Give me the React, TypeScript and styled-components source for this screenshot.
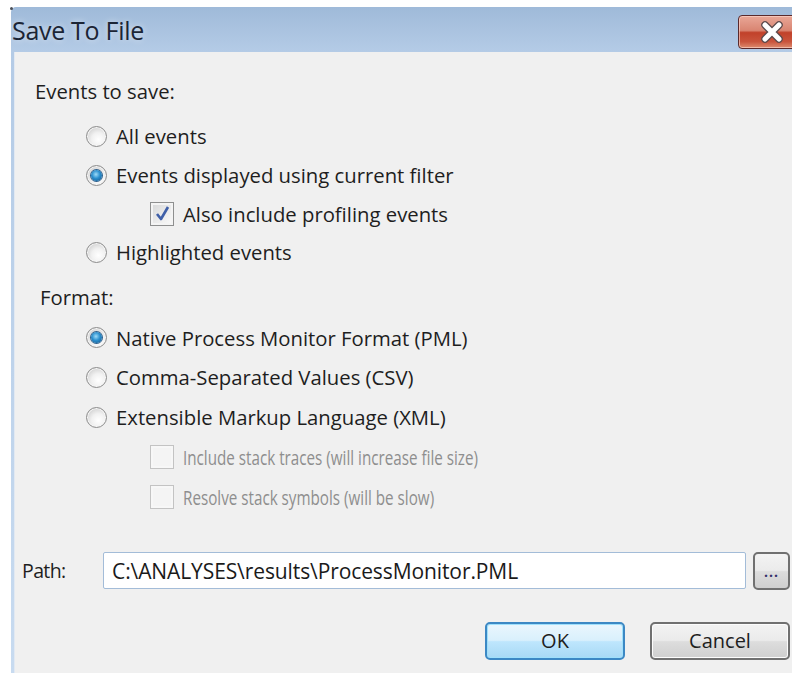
import styled, { createGlobalStyle } from 'styled-components'

const GlobalStyle = createGlobalStyle`
  html, body {
    margin: 0;
    padding: 0;
    background: #ffffff;
  }
  body {
    font-family: 'Open Sans', 'Noto Sans', sans-serif;
  }
`

const Screen = styled.div`
  width: 792px;
  height: 673px;
  overflow: hidden;
  padding: 7px 0 0 11px;
  box-sizing: border-box;
  background: #ffffff;
`

const Window = styled.div`
  position: relative;
  display: flex;
  flex-direction: column;
  height: 100%;
  border-top-left-radius: 5px;
  background: linear-gradient(180deg, #9fbad9 0px, #b4cbe6 44px, #c8dbf0 100%);

  /* dark pixel where the frame corner is drawn */
  &::before {
    content: '';
    position: absolute;
    left: -1px;
    top: 0;
    width: 3px;
    height: 3px;
    border-radius: 50%;
    background: #4a4f58;
  }
`

const TitleBar = styled.div`
  display: flex;
  align-items: center;
  justify-content: space-between;
  height: 45px;
  flex-shrink: 0;
  overflow: hidden;
`

const Title = styled.div`
  padding-left: 1px;
  font-size: 25px;
  letter-spacing: -0.3px;
  color: #1b2535;
  text-shadow: 0 0 6px rgba(255, 255, 255, 0.6);
`

const CloseButton = styled.div`
  display: flex;
  align-items: center;
  justify-content: center;
  width: 68px;
  height: 34px;
  margin-right: -14px;
  margin-top: 4px;
  box-sizing: border-box;
  border: 1px solid #5a2a2c;
  border-radius: 4px;
  background: linear-gradient(180deg, #e9a797 0%, #d98572 45%, #c1412a 52%, #c9543c 80%, #dd8c6f 100%);
  box-shadow: inset 0 0 0 1px rgba(255, 220, 210, 0.6);
`

const Body = styled.div`
  flex: 1;
  margin-left: 3px;
  padding: 19px 0 0 0;
  background: #f0f0f0;
  border-left: 1px solid #e2e9f2;
  color: #1e1e1e;
  font-size: 20.3px;
`

const Heading = styled.div<{ $indent: number; $top?: number }>`
  display: flex;
  align-items: center;
  height: 39px;
  margin-top: ${p => p.$top ?? 0}px;
  padding-left: ${p => p.$indent}px;
`

const Group = styled.div<{ $top: number; $row: number }>`
  display: flex;
  flex-direction: column;
  margin-top: ${p => p.$top}px;

  & > * {
    height: ${p => p.$row}px;
  }
`

const Row = styled.div<{ $indent: number; $disabled?: boolean }>`
  display: flex;
  align-items: center;
  gap: 9px;
  padding-left: ${p => p.$indent}px;
  color: ${p => (p.$disabled ? '#8e8e8e' : 'inherit')};
`

const Label = styled.span<{ $narrow?: boolean }>`
  display: inline-block;
  white-space: nowrap;
  transform: ${p => (p.$narrow ? 'scaleX(0.75)' : 'none')};
  transform-origin: left center;
`

const RadioCircle = styled.span<{ $checked?: boolean }>`
  position: relative;
  width: 21px;
  height: 21px;
  flex-shrink: 0;
  box-sizing: border-box;
  border-radius: 50%;
  border: 1px solid #8c8c8c;
  background: radial-gradient(circle at 60% 65%, #ffffff 0%, #f1f1f1 40%, #cfcfcf 80%, #bdbdbd 100%);
  box-shadow: inset 0 0 0 1px #f6f6f6;

  &::after {
    content: '';
    display: ${p => (p.$checked ? 'block' : 'none')};
    position: absolute;
    left: 4px;
    top: 4px;
    width: 11px;
    height: 11px;
    border-radius: 50%;
    background: radial-gradient(circle at 45% 40%, #9edbf8 0%, #2a8fce 45%, #124f83 100%);
    box-shadow: 0 0 0 1px #2d5f8c;
  }
`

const CheckBox = styled.span<{ $disabled?: boolean }>`
  display: flex;
  align-items: center;
  justify-content: center;
  width: 24px;
  height: 24px;
  flex-shrink: 0;
  box-sizing: border-box;
  border: 1px solid ${p => (p.$disabled ? '#c3c3c3' : '#8e8f8f')};
  background: ${p =>
    p.$disabled
      ? '#f4f4f4'
      : 'linear-gradient(135deg, #d5d6d7 0%, #ededed 60%, #fbfbfb 100%)'};
  box-shadow: inset 0 0 0 2px ${p => (p.$disabled ? '#f7f7f7' : '#f4f4f4')};
`

const PathRow = styled.div`
  display: flex;
  align-items: center;
  margin-top: 35px;
  padding-left: 7px;
`

const PathLabel = styled.span`
  width: 81px;
  flex-shrink: 0;
  font-size: 19.5px;
  letter-spacing: -0.6px;
`

const PathInput = styled.div`
  display: flex;
  align-items: center;
  width: 643px;
  height: 37px;
  box-sizing: border-box;
  padding-left: 8px;
  border: 1px solid #a3bcd8;
  border-radius: 2px;
  background: #ffffff;
  font-size: 21px;
  letter-spacing: -0.1px;
  color: #1a1a1a;
  white-space: nowrap;
`

const BrowseButton = styled.div`
  display: flex;
  align-items: flex-end;
  justify-content: center;
  width: 37px;
  height: 38px;
  margin-left: 7px;
  box-sizing: border-box;
  padding-bottom: 9px;
  border: 2px solid #707070;
  border-radius: 5px;
  background: linear-gradient(180deg, #f3f3f3 0%, #ebebeb 48%, #dddddd 52%, #cfcfcf 100%);
  color: #33306b;
  font-size: 14px;
  font-weight: 700;
  letter-spacing: 1px;
  line-height: 1;
`

const ButtonBar = styled.div`
  display: flex;
  justify-content: flex-end;
  gap: 25px;
  margin-top: 32px;
  padding-right: 2px;
`

const DialogButton = styled.div<{ $primary?: boolean }>`
  display: flex;
  align-items: center;
  justify-content: center;
  width: 140px;
  height: 38px;
  box-sizing: border-box;
  border-radius: 5px;
  border: 2px solid ${p => (p.$primary ? '#3c88c4' : '#707070')};
  background: ${p =>
    p.$primary
      ? 'linear-gradient(180deg, #eaf6fd 0%, #d9f0fc 48%, #bee6fd 52%, #a7d9f5 100%)'
      : 'linear-gradient(180deg, #f2f2f2 0%, #ebebeb 48%, #dddddd 52%, #cfcfcf 100%)'};
  box-shadow: inset 0 0 0 1px ${p => (p.$primary ? '#9fe0fb' : '#fcfcfc')};
  font-size: 20px;
  color: #1e1e1e;
`

function CloseGlyph() {
  return (
    <svg width="26" height="22" viewBox="0 0 26 22">
      <path d="M6 4 L20 18 M20 4 L6 18" stroke="#5b4a4c" strokeWidth="7.5" strokeLinecap="round" />
      <path d="M6 4 L20 18 M20 4 L6 18" stroke="#ffffff" strokeWidth="5" strokeLinecap="round" />
    </svg>
  )
}

function CheckMark() {
  return (
    <svg width="17" height="17" viewBox="0 0 17 17">
      <path d="M3 9 L7 14 L14 2" fill="none" stroke="#3f5fa8" strokeWidth="2.6" strokeLinejoin="round" />
    </svg>
  )
}

interface OptionProps {
  label: string
  checked?: boolean
}

function RadioOption({ label, checked }: OptionProps) {
  return (
    <Row $indent={71}>
      <RadioCircle $checked={checked} />
      <Label>{label}</Label>
    </Row>
  )
}

function CheckOption({ label, checked, disabled }: OptionProps & { disabled?: boolean }) {
  return (
    <Row $indent={135} $disabled={disabled}>
      <CheckBox $disabled={disabled}>{checked && <CheckMark />}</CheckBox>
      <Label $narrow={disabled}>{label}</Label>
    </Row>
  )
}

export default function App() {
  return (
    <>
      <GlobalStyle />
      <Screen>
        <Window>
          <TitleBar>
            <Title>Save To File</Title>
            <CloseButton>
              <CloseGlyph />
            </CloseButton>
          </TitleBar>
          <Body>
            <Heading $indent={20}>Events to save:</Heading>
            <Group $top={7} $row={38.7}>
              <RadioOption label="All events" />
              <RadioOption label="Events displayed using current filter" checked />
              <CheckOption label="Also include profiling events" checked />
              <RadioOption label="Highlighted events" />
            </Group>
            <Heading $indent={25} $top={6}>Format:</Heading>
            <Group $top={1} $row={39.8}>
              <RadioOption label="Native Process Monitor Format (PML)" checked />
              <RadioOption label="Comma-Separated Values (CSV)" />
              <RadioOption label="Extensible Markup Language (XML)" />
              <CheckOption label="Include stack traces (will increase file size)" disabled />
              <CheckOption label="Resolve stack symbols (will be slow)" disabled />
            </Group>
            <PathRow>
              <PathLabel>Path:</PathLabel>
              <PathInput>C:\ANALYSES\results\ProcessMonitor.PML</PathInput>
              <BrowseButton>...</BrowseButton>
            </PathRow>
            <ButtonBar>
              <DialogButton $primary>OK</DialogButton>
              <DialogButton>Cancel</DialogButton>
            </ButtonBar>
          </Body>
        </Window>
      </Screen>
    </>
  )
}
